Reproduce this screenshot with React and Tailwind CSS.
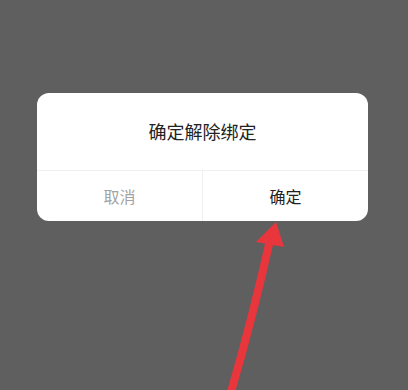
import React from 'react';

const Arrow = () => (
  <svg className="absolute left-0 top-0 pointer-events-none" width="408" height="390" viewBox="0 0 408 390">
    {/* shaft */}
    <path d="M231 392 Q252 320 270 240" stroke="#e8363c" strokeWidth="8" fill="none" strokeLinecap="butt" />
    {/* head */}
    <polygon points="276,222 256,242 284,247" fill="#e8363c" />
  </svg>
);

const App = () => {
  return (
    <div className="relative w-[408px] h-[390px] overflow-hidden bg-[#5f5f5f] pt-[93px] pl-[37px] font-['Noto_Sans_CJK_SC','Noto_Sans',sans-serif]">
      <div className="w-[331px] bg-white rounded-[12px] overflow-hidden">
        <div className="h-[78px] flex items-center justify-center border-b border-[#f0f0f0]">
          <span className="text-[18px] text-[#222]">确定解除绑定</span>
        </div>
        <div className="flex h-[50px]">
          <button className="flex-1 flex items-center justify-center text-[16px] text-[#a3a3a3] border-r border-[#f0f0f0]">
            取消
          </button>
          <button className="flex-1 flex items-center justify-center text-[16px] text-[#222]">
            确定
          </button>
        </div>
      </div>
      <Arrow />
    </div>
  );
};

export default App;
